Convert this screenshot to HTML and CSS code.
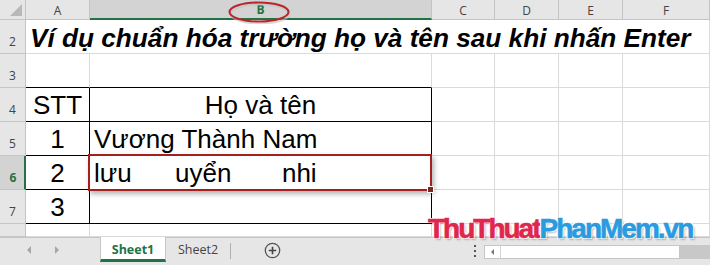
FILE: index.html
```html
<!DOCTYPE html>
<html>

<head>
    <meta charset="utf-8">
    <link rel="stylesheet" href="styles.css">
</head>

<body>
    <div class="sheet">
        <div class="grid">
            <!-- column headers -->
            <div class="corner"></div>
            <div class="hd">A</div>
            <div class="hd hd-active">B</div>
            <div class="hd">C</div>
            <div class="hd">D</div>
            <div class="hd">E</div>
            <div class="hd">F</div>

            <!-- row 2 -->
            <div class="rh">2</div>
            <div class="c title">Ví dụ chuẩn hóa trường họ và tên sau khi nhấn Enter</div>

            <!-- row 3 -->
            <div class="rh">3</div>
            <div class="c bb"></div>
            <div class="c bb"></div>
            <div class="c"></div>
            <div class="c"></div>
            <div class="c"></div>
            <div class="c"></div>

            <!-- row 4 -->
            <div class="rh">4</div>
            <div class="c box center">STT</div>
            <div class="c box center">Họ và tên</div>
            <div class="c"></div>
            <div class="c"></div>
            <div class="c"></div>
            <div class="c"></div>

            <!-- row 5 -->
            <div class="rh">5</div>
            <div class="c box center">1</div>
            <div class="c box">Vương Thành Nam</div>
            <div class="c"></div>
            <div class="c"></div>
            <div class="c"></div>
            <div class="c"></div>

            <!-- row 6 -->
            <div class="rh rh-active">6</div>
            <div class="c box center">2</div>
            <div class="c box pre">lưu      uyển       nhi</div>
            <div class="c"></div>
            <div class="c"></div>
            <div class="c"></div>
            <div class="c"></div>

            <!-- row 7 -->
            <div class="rh">7</div>
            <div class="c box center">3</div>
            <div class="c box"></div>
            <div class="c"></div>
            <div class="c"></div>
            <div class="c"></div>
            <div class="c"></div>

            <!-- row 8 (cut off) -->
            <div class="rh"></div>
            <div class="c"></div>
            <div class="c"></div>
            <div class="c"></div>
            <div class="c"></div>
            <div class="c"></div>
            <div class="c"></div>
        </div>

        <!-- sheet tabs + scrollbar -->
        <div class="tabbar">
            <div class="tab-nav">
                <span class="tri tri-left"></span>
                <span class="tri tri-right"></span>
            </div>
            <div class="tab active-tab">Sheet1</div>
            <div class="tab">Sheet2</div>
            <span class="tab-sep"></span>
            <div class="add-sheet">
                <svg width="17" height="17" viewBox="0 0 17 17">
                    <circle cx="8.5" cy="8.5" r="7.2" fill="none" stroke="#555" stroke-width="1.3" />
                    <path d="M8.5 4.8v7.4M4.8 8.5h7.4" stroke="#444" stroke-width="1.6" />
                </svg>
            </div>
            <div class="spacer"></div>
            <div class="dots"><i></i><i></i><i></i></div>
            <div class="hscroll">
                <span class="hscroll-btn"><span class="tri tri-left small"></span></span>
            </div>
            <div class="hscroll-rest"></div>
        </div>

        <!-- annotations drawn over the sheet -->
        <svg class="mark-b" width="64" height="24" viewBox="0 0 64 24">
            <ellipse cx="32" cy="12.5" rx="29.5" ry="9.5" fill="none" stroke="#bfbfbf" stroke-width="2" transform="translate(1 1.5)" opacity="0.6" />
            <ellipse cx="32" cy="12" rx="29.5" ry="9.5" fill="none" stroke="#b8262c" stroke-width="2" />
        </svg>
        <div class="sel-box"><span class="handle"></span></div>
        <div class="watermark"><span class="wm-red">ThuThuat</span><span class="wm-blue">PhanMem.vn</span></div>
    </div>
</body>

</html>
```

FILE: styles.css
```css
body {
    margin: 0;
    background: #fff;
}

.sheet {
    position: relative;
    width: 710px;
    height: 265px;
    overflow: hidden;
    font-family: "Liberation Sans", Arial, sans-serif;
}

/* the spreadsheet grid */
.grid {
    display: grid;
    grid-template-columns: 26px 64px 342px 63px 64px 64px 1fr;
    grid-template-rows: 20px repeat(6, 34px) 13px;
}

.grid > div {
    box-sizing: border-box;
    border-right: 1px solid #dadada;
    border-bottom: 1px solid #dadada;
}

.corner {
    position: relative;
    background: #e6e6e6;
    border-color: #c4c4c4 !important;
}

.corner::after {
    content: "";
    position: absolute;
    right: 3px;
    bottom: 3px;
    width: 12px;
    height: 12px;
    background: #b8b8b8;
    clip-path: polygon(100% 0, 100% 100%, 0 100%);
}

.hd {
    background: #e6e6e6;
    border-color: #c4c4c4 !important;
    font-family: "Open Sans", sans-serif;
    font-size: 12px;
    color: #444;
    display: flex;
    align-items: center;
    justify-content: center;
    padding-top: 1px;
}

.hd-active {
    background: #d3d3d3;
    border-bottom: 2px solid #217346 !important;
    color: #217346;
    font-weight: bold;
}

.rh {
    background: #e6e6e6;
    border-color: #c4c4c4 !important;
    font-family: "Open Sans", sans-serif;
    font-size: 12px;
    color: #444;
    display: flex;
    align-items: flex-end;
    justify-content: center;
    padding-bottom: 3px;
}

.rh-active {
    background: #d3d3d3;
    border-right: 2px solid #217346 !important;
    color: #217346;
    font-weight: bold;
    padding-left: 2px;
}

.c {
    display: flex;
    align-items: flex-end;
    padding: 0 4px 0 4px;
    font-size: 26px;
    line-height: 29px;
    color: #000;
    white-space: nowrap;
}

.title {
    grid-column: 2 / -1;
    font-weight: bold;
    font-style: italic;
    font-size: 26.2px;
    padding-left: 4px;
    padding-bottom: 0;
}

.center {
    justify-content: center;
}

.pre {
    white-space: pre;
}

.bb {
    border-bottom-color: #000 !important;
}

.box {
    border-right-color: #000 !important;
    border-bottom-color: #000 !important;
    padding-bottom: 1px;
}

/* sheet tabs */
.tabbar {
    display: flex;
    align-items: flex-start;
    height: 28px;
    box-sizing: border-box;
    border-top: 1px solid #c6c6c6;
    background: #e6e6e6;
    font-family: "Open Sans", sans-serif;
    font-size: 12.5px;
    color: #444;
}

.tab-nav {
    width: 100px;
    height: 24px;
    display: flex;
    align-items: center;
    padding-left: 27px;
    gap: 24px;
    box-sizing: border-box;
}

.tri {
    width: 0;
    height: 0;
    border-top: 4px solid transparent;
    border-bottom: 4px solid transparent;
}

.tri-left {
    border-right: 4px solid #a6a6a6;
}

.tri-right {
    border-left: 4px solid #a6a6a6;
}

.tri.small {
    border-top-width: 3px;
    border-bottom-width: 3px;
    border-right: 3px solid #777;
}

.tab {
    height: 24px;
    line-height: 23px;
    padding: 0 12px;
    box-sizing: border-box;
}

.active-tab {
    width: 66px;
    margin-top: -1px;
    height: 25px;
    background: #fff;
    border-left: 1px solid #c6c6c6;
    border-right: 1px solid #c6c6c6;
    border-bottom: 3px solid #217346;
    color: #217346;
    font-weight: bold;
    text-align: center;
    padding: 1px 0 0;
}

.tab-sep {
    width: 1px;
    height: 16px;
    margin-top: 5px;
    margin-left: 0;
    background: #b0b0b0;
}

.add-sheet {
    margin: 4px 0 0 33px;
    height: 17px;
}

.spacer {
    flex: 1;
}

.dots {
    width: 16px;
    display: flex;
    flex-direction: column;
    align-items: center;
    gap: 3px;
    padding-top: 7px;
    margin-right: 1px;
}

.dots i {
    width: 2px;
    height: 2px;
    background: #555;
}

.hscroll {
    width: 196px;
    height: 14px;
    margin-top: 7px;
    box-sizing: border-box;
    background: #fff;
    border: 1px solid #c6c6c6;
    display: flex;
}

.hscroll-btn {
    width: 15px;
    border-right: 1px solid #d6d6d6;
    display: flex;
    align-items: center;
    justify-content: center;
}

.hscroll-rest {
    width: 30px;
    height: 14px;
    margin-top: 7px;
    background: #c8c8c8;
}

/* annotations */
.mark-b {
    position: absolute;
    left: 227px;
    top: 0;
}

.sel-box {
    position: absolute;
    left: 88px;
    top: 154px;
    width: 344px;
    height: 37px;
    box-sizing: border-box;
    border: 2px solid #a3201f;
    box-shadow: 2px 3px 5px rgba(0, 0, 0, 0.3);
}

.handle {
    position: absolute;
    right: -4px;
    bottom: -4px;
    width: 5px;
    height: 5px;
    background: #7a2a22;
    border: 1px solid #fff;
}

.watermark {
    position: absolute;
    left: 428px;
    top: 215px;
    font-family: "Liberation Sans", Arial, sans-serif;
    font-weight: bold;
    font-size: 28px;
    line-height: 28px;
    letter-spacing: -2px;
    white-space: nowrap;
    -webkit-text-stroke: 0.6px currentColor;
    text-shadow: 1px 1px 0 #fff, -1px -1px 0 #fff, 1px -1px 0 #fff, -1px 1px 0 #fff,
        2px 2px 2px rgba(0, 0, 0, 0.25);
}

.wm-red {
    color: #e0264d;
}

.wm-blue {
    color: #2b9be0;
}
```
